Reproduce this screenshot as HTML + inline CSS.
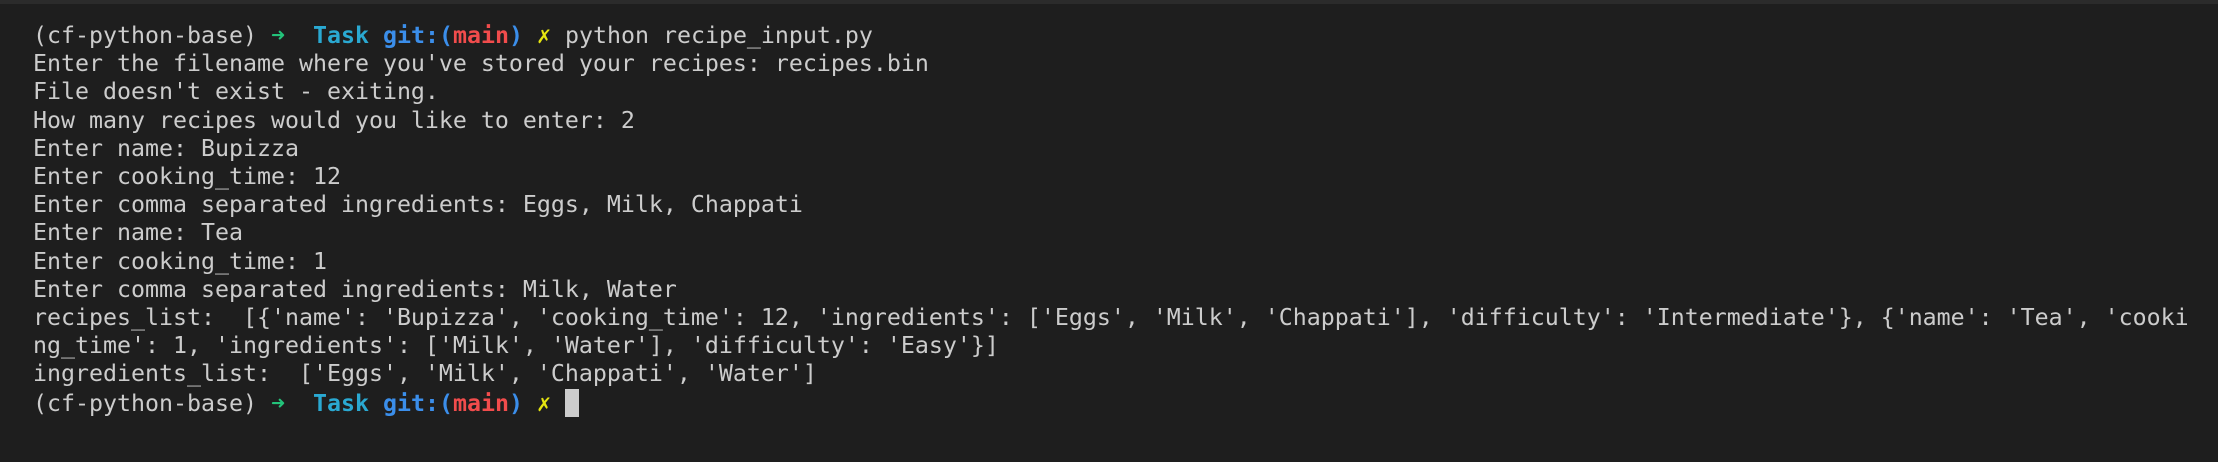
<!DOCTYPE html>
<html><head><meta charset="utf-8"><style>
html,body{margin:0;padding:0;width:2218px;height:462px;background:#1e1e1e;overflow:hidden}
.top{position:absolute;left:0;top:0;width:2218px;height:4px;background:#2b2b2b}
pre{position:absolute;left:33px;top:22px;margin:0;font-family:"DejaVu Sans Mono","Liberation Mono",monospace;font-size:23.26px;line-height:28.2px;color:#cccccc;white-space:pre}
.g{color:#23c37a}.c{color:#2aa9d2;font-weight:bold}.b{color:#3b8eea;font-weight:bold}.r{color:#f14c4c;font-weight:bold}.y{color:#e5e510}
.cur{display:inline-block;width:14px;height:28px;background:#cccccc;vertical-align:-6px}
</style></head><body><div class="top"></div><pre>(cf-python-base) <span class="g">➜</span>  <span class="c">Task</span> <span class="b">git:(</span><span class="r">main</span><span class="b">)</span> <span class="y">✗</span> python recipe_input.py
Enter the filename where you've stored your recipes: recipes.bin
File doesn't exist - exiting.
How many recipes would you like to enter: 2
Enter name: Bupizza
Enter cooking_time: 12
Enter comma separated ingredients: Eggs, Milk, Chappati
Enter name: Tea
Enter cooking_time: 1
Enter comma separated ingredients: Milk, Water
recipes_list:  [{'name': 'Bupizza', 'cooking_time': 12, 'ingredients': ['Eggs', 'Milk', 'Chappati'], 'difficulty': 'Intermediate'}, {'name': 'Tea', 'cooki
ng_time': 1, 'ingredients': ['Milk', 'Water'], 'difficulty': 'Easy'}]
ingredients_list:  ['Eggs', 'Milk', 'Chappati', 'Water']
(cf-python-base) <span class="g">➜</span>  <span class="c">Task</span> <span class="b">git:(</span><span class="r">main</span><span class="b">)</span> <span class="y">✗</span> <span class="cur"></span></pre></body></html>
